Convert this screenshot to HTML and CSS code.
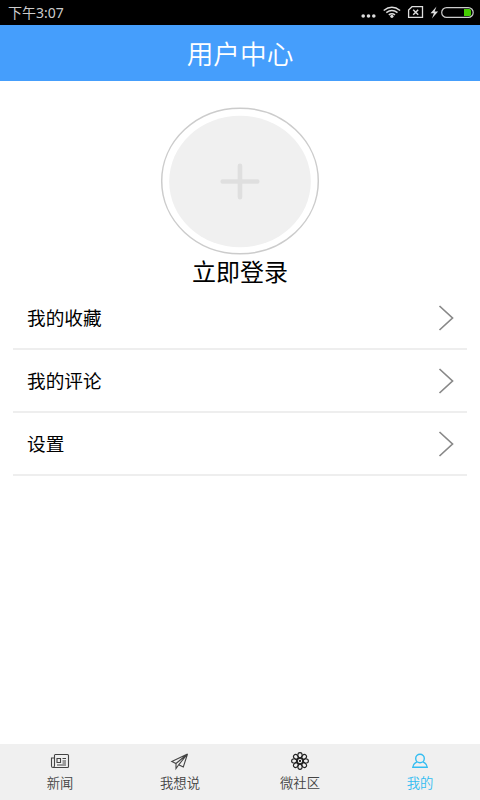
FILE: index.html
```html
<!DOCTYPE html>
<html lang="zh-CN">
<head>
    <meta charset="UTF-8">
    <meta name="viewport" content="width=device-width, initial-scale=1.0">
    <title>用户中心</title>
    <link rel="stylesheet" href="styles.css">
</head>
<body>
    <div class="status-bar">
        <span class="time">下午3:07</span>
        <svg class="status-icons" width="120" height="25" viewBox="0 0 120 25" fill="none">
            <g fill="#ddd">
                <circle cx="3.2" cy="16" r="1.8"/>
                <circle cx="8.5" cy="16" r="1.8"/>
                <circle cx="13.8" cy="16" r="1.8"/>
                <circle cx="31.9" cy="16.3" r="1.6"/>
                <path d="M76.5 6.5L70.5 13.2h3.4l-2 5.3 6.2-7h-3.5z"/>
            </g>
            <g stroke="#ddd" stroke-width="1.5">
                <path d="M23.7 10.5q8.2-6.6 16.4 0M26.3 12.7q5.6-4.4 11.2 0M28.8 14.9q3.1-2.4 6.2 0"/>
                <path stroke-width="1.3" d="M52 6.7h10.5V17.4H48.6V10z"/>
                <path stroke-width="1.5" d="M53.2 9.8l5 5M58.2 9.8l-5 5"/>
            </g>
            <rect x="81.7" y="7.6" width="31.5" height="9.8" rx="4.9" stroke="#ccc" stroke-width="1.2"/>
            <path d="M104 9h5.5q1.5 0 1.5 1.5v4q0 1.5-1.5 1.5H104z" fill="#4c0"/>
        </svg>
    </div>
    <div class="header">用户中心</div>
    <div class="container">
        <div class="login">
            <svg class="avatar" width="160" height="148" viewBox="0 0 160 148">
                <ellipse cx="80" cy="74" rx="78.3" ry="72.8" fill="#fff" stroke="#ccc" stroke-width="1.5"/>
                <ellipse cx="80" cy="74.5" rx="70.8" ry="65.7" fill="#f0f0f0"/>
                <path d="M62.7 74.5h34.6M80 58.7v31.6" stroke="#dfdfdf" stroke-width="4.6" stroke-linecap="round"/>
            </svg>
            <div class="login-text">立即登录</div>
        </div>
        <div class="menu">
            <div class="item">
                <span>我的收藏</span>
                <svg class="arrow" width="16" height="26" viewBox="0 0 16 26"><path d="M1.5 1l13 12L1.5 25"/></svg>
            </div>
            <div class="item">
                <span>我的评论</span>
                <svg class="arrow" width="16" height="26" viewBox="0 0 16 26"><path d="M1.5 1l13 12L1.5 25"/></svg>
            </div>
            <div class="item">
                <span>设置</span>
                <svg class="arrow" width="16" height="26" viewBox="0 0 16 26"><path d="M1.5 1l13 12L1.5 25"/></svg>
            </div>
        </div>
    </div>
    <div class="tabs">
        <div class="tab">
            <svg width="20" height="20" viewBox="0 0 20 20">
                <path d="M5 3.5h12.5q1 0 1 1v11q0 1-1 1H3q-1.5 0-1.5-1.5V7H4.5M4.5 3.5V14.5q0 2-1.5 2"/>
                <path d="M7 7.5h3.5v4H7zM12.5 7.5H16M12.5 10H16M12.5 12H16M7 14h9"/>
            </svg>
            <span>新闻</span>
        </div>
        <div class="tab">
            <svg width="20" height="20" viewBox="0 0 20 20">
                <path d="M17.5 3L1.8 10.5l4.2 2zM17.5 3L6 12.5v5l2.7-3.7zM17.5 3L8.7 13.8l4.6 2.2z"/>
            </svg>
            <span>我想说</span>
        </div>
        <div class="tab">
            <svg class="flower" width="20" height="20" viewBox="0 0 20 20">
                <ellipse cx="10" cy="4.5" rx="2.2" ry="2.9"/>
                <ellipse cx="10" cy="4.5" rx="2.2" ry="2.9" transform="rotate(45 10 10)"/>
                <ellipse cx="10" cy="4.5" rx="2.2" ry="2.9" transform="rotate(90 10 10)"/>
                <ellipse cx="10" cy="4.5" rx="2.2" ry="2.9" transform="rotate(135 10 10)"/>
                <ellipse cx="10" cy="4.5" rx="2.2" ry="2.9" transform="rotate(180 10 10)"/>
                <ellipse cx="10" cy="4.5" rx="2.2" ry="2.9" transform="rotate(225 10 10)"/>
                <ellipse cx="10" cy="4.5" rx="2.2" ry="2.9" transform="rotate(270 10 10)"/>
                <ellipse cx="10" cy="4.5" rx="2.2" ry="2.9" transform="rotate(315 10 10)"/>
                <circle class="ring" cx="10" cy="10" r="3.3"/>
                <circle cx="10" cy="10" r="0.6"/>
            </svg>
            <span>微社区</span>
        </div>
        <div class="tab active">
            <svg width="20" height="20" viewBox="0 0 20 20">
                <circle cx="10" cy="7.5" r="4.3"/>
                <path d="M7 10.8Q3.2 12.5 2.8 16.3H17.2Q16.8 12.5 13 10.8"/>
            </svg>
            <span>我的</span>
        </div>
    </div>
</body>
</html>
```
FILE: styles.css
```css
body {
    font-family: 'Noto Sans CJK SC', sans-serif;
    background: #fff;
    margin: 0;
    height: 100vh;
    display: flex;
    flex-direction: column;
    color: #000;
}
.status-bar {
    height: 25px;
    background: #000;
    color: #ccc;
    display: flex;
    align-items: center;
    justify-content: space-between;
    padding-left: 8px;
}
.time {
    font-family: 'Noto Sans', 'Noto Sans CJK SC', sans-serif;
    font-size: 14px;
    line-height: 20px;
}
.header {
    height: 56px;
    line-height: 56px;
    background: #459efc;
    color: #fff;
    text-align: center;
    font-size: 26.67px;
    font-weight: 350;
}
.container {
    flex: 1;
}
.login {
    display: flex;
    flex-direction: column;
    align-items: center;
    padding-top: 26px;
}
.avatar {
    display: block;
}
.login-text {
    font-size: 24px;
    line-height: 32px;
}
.menu {
    margin: 0 13px;
}
.item {
    height: 61px;
    border-bottom: 2px solid #eee;
    display: flex;
    align-items: center;
    justify-content: space-between;
    padding: 0 13px 0 14px;
    font-size: 18.67px;
}
.item span {
    padding-bottom: 2px;
}
.arrow {
    fill: none;
    stroke: #888;
    stroke-width: 1.7;
}
.tabs {
    height: 56px;
    background: #f0f0f0;
    display: flex;
}
.tab {
    flex: 1;
    display: flex;
    flex-direction: column;
    align-items: center;
    padding-top: 7px;
    font-size: 13.33px;
    font-weight: 350;
    line-height: 24px;
    color: #444;
}
.tab svg {
    fill: none;
    stroke: #444;
    stroke-width: 1.1;
}
.tab .flower {
    stroke: #222;
}
.flower .ring {
    stroke-width: 1.5;
}
.tab.active {
    color: #33bdf2;
}
.tab.active svg {
    stroke: #33bdf2;
    stroke-width: 1.4;
}
```
